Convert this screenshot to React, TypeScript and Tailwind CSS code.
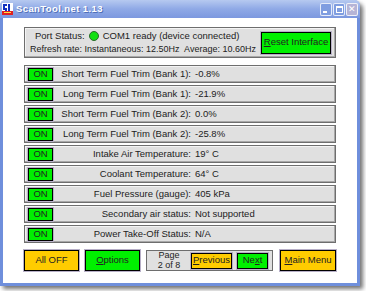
import React from "react";

const rows: { label: string; value: string }[] = [
  { label: "Short Term Fuel Trim (Bank 1):", value: "-0.8%" },
  { label: "Long Term Fuel Trim (Bank 1):", value: "-21.9%" },
  { label: "Short Term Fuel Trim (Bank 2):", value: "0.0%" },
  { label: "Long Term Fuel Trim (Bank 2):", value: "-25.8%" },
  { label: "Intake Air Temperature:", value: "19° C" },
  { label: "Coolant Temperature:", value: "64° C" },
  { label: "Fuel Pressure (gauge):", value: "405 kPa" },
  { label: "Secondary air status:", value: "Not supported" },
  { label: "Power Take-Off Status:", value: "N/A" },
];

function AppIcon() {
  return (
    <svg width="11" height="12" viewBox="0 0 11 12">
      <rect x="0" y="0" width="11" height="12" fill="#ffffff" />
      <rect x="1" y="1" width="4" height="2" fill="#1030c0" />
      <rect x="1" y="3" width="2" height="2" fill="#1030c0" />
      <rect x="1" y="5" width="4" height="2" fill="#1030c0" />
      <rect x="3" y="7" width="2" height="1" fill="#1030c0" />
      <rect x="6" y="1" width="2" height="7" fill="#1030c0" />
      <rect x="0" y="8" width="11" height="4" fill="#e02020" />
      <rect x="2" y="9" width="7" height="1" fill="#ffe040" />
    </svg>
  );
}

function TitleBar() {
  return (
    <div className="h-[18px] flex items-center bg-gradient-to-b from-[#b6c9f0] via-[#8fa9e6] to-[#7c98df] rounded-t-[5px] pl-[2px] pr-[2px]">
      <AppIcon />
      <span className="ml-[3px] text-[9.5px] font-bold text-white [text-shadow:1px_1px_0_#5070b8] tracking-[0.4px]">
        ScanTool.net 1.13
      </span>
      <div className="ml-auto flex gap-[1px]">
        <div className="w-[12px] h-[13px] rounded-[2px] border border-white/80 bg-[#7f9de0] relative">
          <div className="absolute left-[2px] bottom-[2px] w-[4px] h-[2px] bg-white" />
        </div>
        <div className="w-[12px] h-[13px] rounded-[2px] border border-white/80 bg-[#7f9de0] flex items-center justify-center">
          <div className="w-[7px] h-[7px] border border-white border-t-2" />
        </div>
        <div className="w-[12px] h-[13px] rounded-[2px] border border-white/80 bg-[#b5b4d6] flex items-center justify-center text-white text-[9px] leading-none">
          ✕
        </div>
      </div>
    </div>
  );
}

function Btn(props: {
  color: string;
  className?: string;
  children: React.ReactNode;
}) {
  const { color, className, children } = props;
  return (
    <div
      className={`${color} ${className ?? ""} shrink-0 whitespace-nowrap border border-black outline outline-1 outline-[#b8b0c8] flex items-center justify-center text-[9.5px] text-[#222]`}
    >
      {children}
    </div>
  );
}

function Row(props: { label: string; value: string }) {
  const { label, value } = props;
  return (
    <div className="h-[18px] flex items-center bg-[#e0e0e0] border border-[#6e6e6e] shadow-[inset_-1px_-1px_0_#a8a8a8,inset_1px_1px_0_#f4f4f4] pl-[3px] whitespace-nowrap text-[9.5px] text-[#222]">
      <Btn color="bg-[#00f000]" className="w-[25px] h-[13px]">
        ON
      </Btn>
      <span className="w-[138px] text-right">{label}</span>
      <span className="ml-[4px]">{value}</span>
    </div>
  );
}

export default function App() {
  return (
    <div className="w-[366px] h-[291px] bg-white overflow-hidden font-['Liberation_Sans',Arial,sans-serif]">
      <div className="w-[360px] h-[286px] flex flex-col rounded-t-[6px] bg-[#6f8fdc] shadow-[3px_3px_4px_rgba(0,0,0,0.55)]">
        <TitleBar />
        <div className="flex-1 mx-[3px] mb-[3px] bg-white pl-[21px] pt-[9px] flex flex-col">
          <div className="w-[312px] h-[31px] bg-[#e0e0e0] border border-[#6e6e6e] shadow-[inset_-1px_-1px_0_#a8a8a8,inset_1px_1px_0_#f4f4f4] flex items-center pl-[5px] pr-[4px]">
            <div className="flex flex-col text-[9.5px] text-[#222] leading-[13px] whitespace-nowrap">
              <div className="flex items-center pl-[5px]">
                <span>Port Status:</span>
                <span className="inline-block w-[10px] h-[10px] rounded-full bg-[#10e010] border border-[#2a6a2a] mx-[4px]" />
                <span>COM1 ready (device connected)</span>
              </div>
              <div className="mt-[1px] text-[9px]">
                Refresh rate: Instantaneous: 12.50Hz&nbsp; Average: 10.60Hz
              </div>
            </div>
            <Btn color="bg-[#00f000]" className="ml-auto w-[70px] h-[22px]">
              <span>
                <span className="underline">R</span>eset Interface
              </span>
            </Btn>
          </div>
          <div className="mt-[7px] w-[312px] flex flex-col gap-[2px]">
            {rows.map((r) => (
              <Row key={r.label} label={r.label} value={r.value} />
            ))}
          </div>
          <div className="mt-[7px] w-[312px] flex items-center">
            <Btn color="bg-[#ffcc00]" className="w-[55px] h-[21px]">
              All OFF
            </Btn>
            <Btn color="bg-[#00f000]" className="ml-[6px] w-[55px] h-[21px]">
              <span>
                <span className="underline">O</span>ptions
              </span>
            </Btn>
            <div className="ml-[6px] w-[127px] h-[21px] shrink-0 bg-[#e0e0e0] border border-[#6e6e6e] flex items-center">
              <div className="w-[44px] flex flex-col items-center text-[9px] leading-[9.5px] text-[#222] whitespace-nowrap">
                <span>Page</span>
                <span>2 of 8</span>
              </div>
              <Btn color="bg-[#ffcc00]" className="w-[41px] h-[16px]">
                <span>
                  <span className="underline">P</span>revious
                </span>
              </Btn>
              <Btn color="bg-[#00f000]" className="ml-[5px] w-[31px] h-[16px]">
                <span>
                  Ne<span className="underline">x</span>t
                </span>
              </Btn>
            </div>
            <Btn color="bg-[#ffcc00]" className="ml-[7px] w-[56px] h-[21px]">
              <span>
                <span className="underline">M</span>ain Menu
              </span>
            </Btn>
          </div>
        </div>
      </div>
    </div>
  );
}
